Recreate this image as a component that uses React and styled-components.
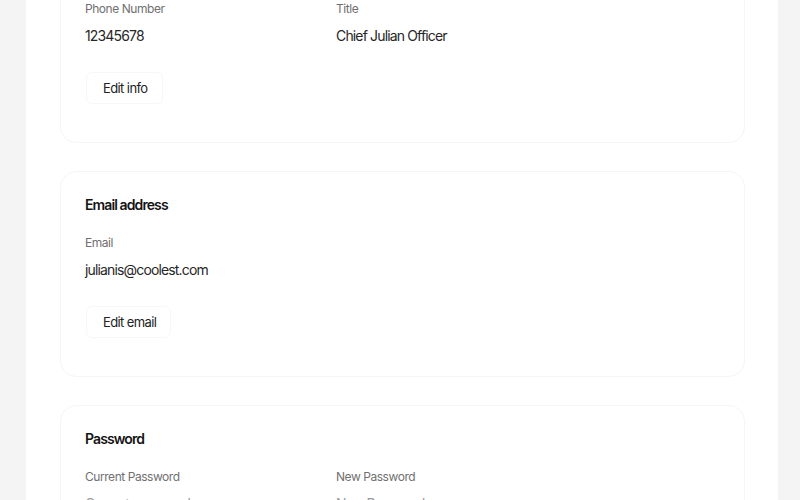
import React from 'react';
import styled, { createGlobalStyle } from 'styled-components';

const GlobalStyle = createGlobalStyle`
  html, body {
    margin: 0;
    padding: 0;
    background: #f4f4f4;
    font-family: Inter, "Liberation Sans", sans-serif;
    overflow: hidden;
  }
`;

const Page = styled.div`
  width: 752px;
  height: 500px;
  margin-left: 26px;
  background: #ffffff;
  overflow: hidden;
`;

const Column = styled.div`
  display: flex;
  flex-direction: column;
  gap: 28px;
  padding: 0 33px 0 34px;
  margin-top: -63px;
`;

const Card = styled.section`
  border-radius: 16px;
  background: #fff;
  border: 1px solid #f5f5f5;
  padding: 23px 24px 37px;
`;

const Heading = styled.h2`
  margin: 0 0 19px;
  font-size: 14px;
  line-height: 20px;
  font-weight: 600;
  letter-spacing: -0.9px;
  color: #141414;
`;

const Fields = styled.div`
  display: grid;
  grid-template-columns: 251px 1fr;
`;

const Field = styled.div`
  display: flex;
  flex-direction: column;
  gap: 9px;
`;

const Label = styled.span`
  font-size: 12px;
  line-height: 16px;
  color: #707070;
  letter-spacing: -0.45px;
  margin-top: 1px;
`;

const Value = styled.span`
  font-size: 14px;
  line-height: 20px;
  color: #262626;
  letter-spacing: -0.85px;
`;

const Input = styled.input`
  border: none;
  outline: none;
  padding: 0;
  font-family: inherit;
  font-size: 14px;
  line-height: 20px;
  letter-spacing: -0.85px;
  background: transparent;
  color: #262626;
  width: 200px;

  &::placeholder {
    color: #9a9a9a;
  }
`;

const Button = styled.button`
  margin-top: 26px;
  align-self: flex-start;
  font-family: inherit;
  font-size: 13px;
  line-height: 16px;
  letter-spacing: -0.6px;
  color: #222;
  background: #fff;
  border: 1px solid #f7f7f7;
  border-radius: 6px;
  padding: 7px 14px 7px 16px;
  margin-left: 1px;
`;

const Body = styled.div`
  display: flex;
  flex-direction: column;
  padding-bottom: 1px;
`;

export default function App() {
  return (
    <>
      <GlobalStyle />
      <Page>
        <Column>
          <Card>
            <Heading>Personal info</Heading>
            <Body>
              <Fields>
                <Field>
                  <Label>Phone Number</Label>
                  <Value>12345678</Value>
                </Field>
                <Field>
                  <Label>Title</Label>
                  <Value>Chief Julian Officer</Value>
                </Field>
              </Fields>
              <Button>Edit info</Button>
            </Body>
          </Card>

          <Card>
            <Heading>Email address</Heading>
            <Body>
              <Fields>
                <Field>
                  <Label>Email</Label>
                  <Value>julianis@coolest.com</Value>
                </Field>
              </Fields>
              <Button>Edit email</Button>
            </Body>
          </Card>

          <Card>
            <Heading>Password</Heading>
            <Body>
              <Fields>
                <Field>
                  <Label>Current Password</Label>
                  <Input type="password" placeholder="Current password" />
                </Field>
                <Field>
                  <Label>New Password</Label>
                  <Input type="password" placeholder="New Password" />
                </Field>
              </Fields>
            </Body>
          </Card>
        </Column>
      </Page>
    </>
  );
}
